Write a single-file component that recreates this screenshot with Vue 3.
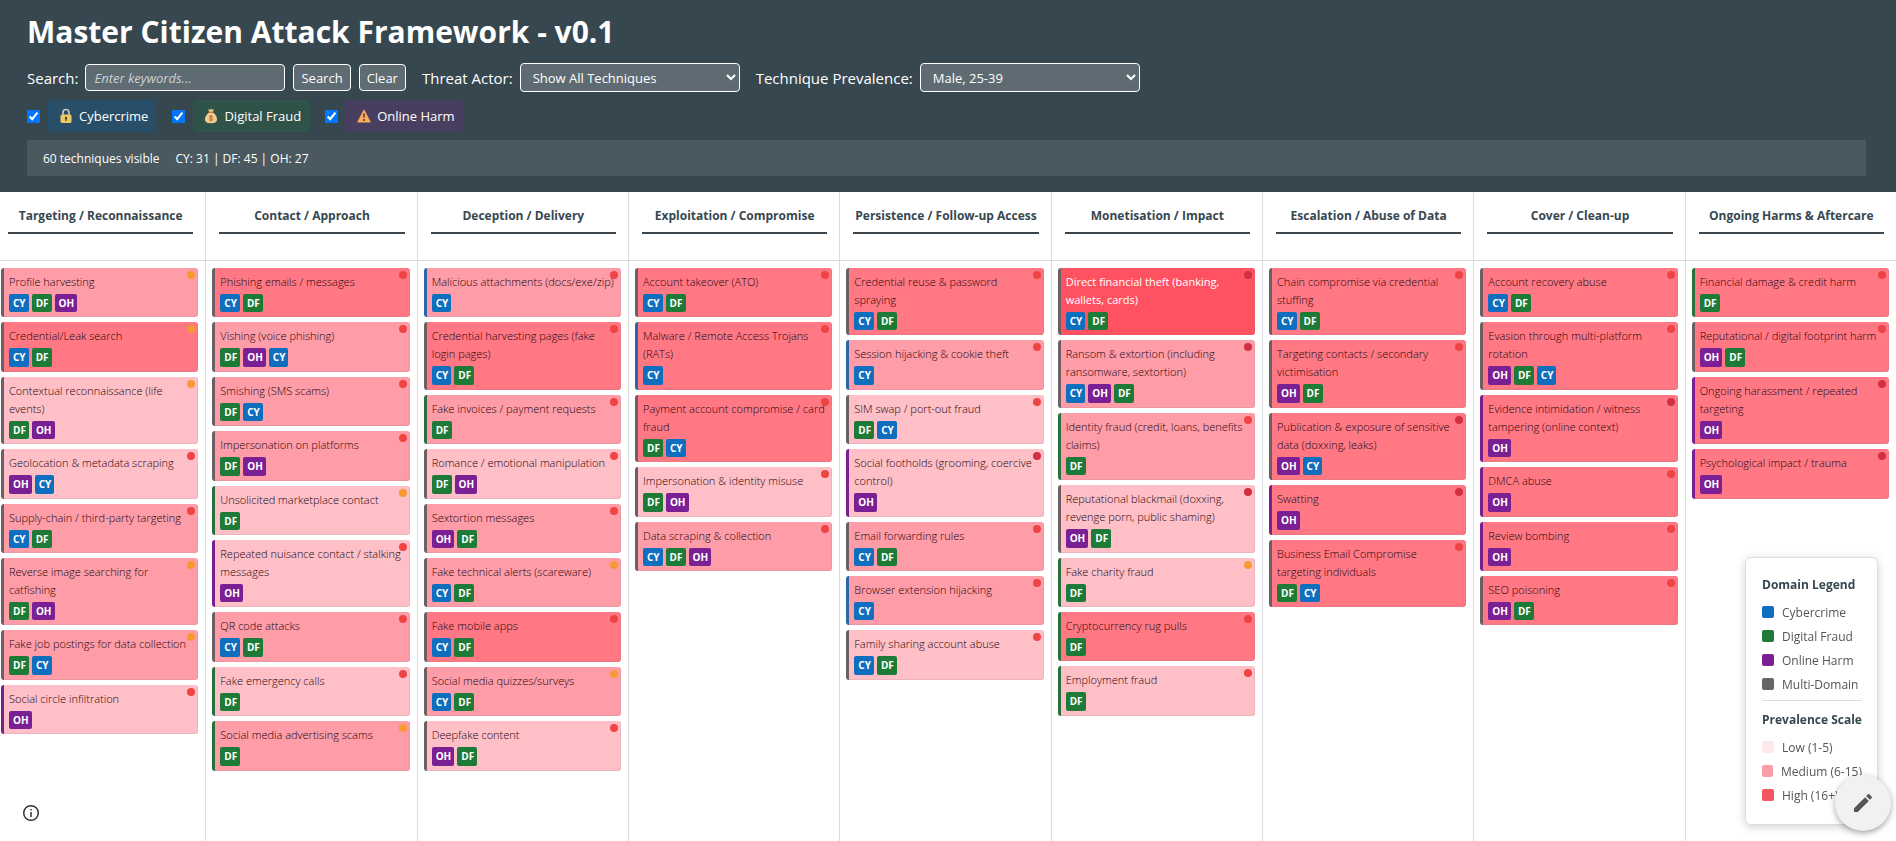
<template>
  <div class="framework">
    <header class="top-bar">
      <h1>Master Citizen Attack Framework - v0.1</h1>

      <form class="controls" @submit.prevent>
        <div class="control">
          <label for="search">Search:</label>
          <input id="search" v-model="keywords" class="field search-field" type="text" placeholder="Enter keywords...">
        </div>
        <button class="field btn" type="submit">Search</button>
        <button class="field btn" type="button" @click="keywords = ''">Clear</button>
        <div class="control spaced">
          <label for="actor">Threat Actor:</label>
          <select id="actor" class="field select-field">
            <option>Show All Techniques</option>
          </select>
        </div>
        <div class="control spaced">
          <label for="prevalence">Technique Prevalence:</label>
          <select id="prevalence" class="field select-field">
            <option>Male, 25-39</option>
          </select>
        </div>
      </form>

      <div class="domain-filters">
        <div class="filter">
          <input id="filter-cy" v-model="enabled.CY" type="checkbox">
          <label for="filter-cy" class="pill pill-cy">
            <svg width="14" height="16" viewBox="0 0 14 16">
              <path d="M4 8V4.5a3 3 0 0 1 6 0V8" fill="none" stroke="#c9cdd0" stroke-width="1.6"/>
              <rect x="1.5" y="6.5" width="11" height="8.5" rx="1.5" fill="#efc763"/>
              <circle cx="7" cy="10" r="1.2" fill="#4e4232"/>
              <path d="M6.4 10h1.2v3H6.4z" fill="#4e4232"/>
            </svg>
            Cybercrime
          </label>
        </div>
        <div class="filter">
          <input id="filter-df" v-model="enabled.DF" type="checkbox">
          <label for="filter-df" class="pill pill-df">
            <svg width="14" height="16" viewBox="0 0 14 16">
              <path d="M4 1l1.6.8L7 .8l1.4 1L10 1 8.8 4H5.2z" fill="#f2c078"/>
              <path d="M5 4.6h4c2.4 1.8 4 4.2 4 6.6 0 2.6-1.8 4-6 4s-6-1.4-6-4c0-2.4 1.6-4.8 4-6.6z" fill="#f3c993"/>
              <path d="M4.8 4.4h4.4" stroke="#c77c30" stroke-width="1.2"/>
              <path d="M8.8 8.6C8.2 7.8 5.4 7.6 5.4 9s3.3.9 3.3 2.3-2.8 1.2-3.5.3M7 7v6.4" fill="none" stroke="#b5702d" stroke-width="1"/>
            </svg>
            Digital Fraud
          </label>
        </div>
        <div class="filter">
          <input id="filter-oh" v-model="enabled.OH" type="checkbox">
          <label for="filter-oh" class="pill pill-oh">
            <svg width="14" height="16" viewBox="0 0 14 16">
              <path d="M7 2L13.2 14H.8z" fill="#fbab5c" stroke="#fbab5c" stroke-linejoin="round"/>
              <path d="M6.1 5.4h1.8L7.5 10h-1z" fill="#4b3a35"/>
              <circle cx="7" cy="12" r="1" fill="#4b3a35"/>
            </svg>
            Online Harm
          </label>
        </div>
      </div>

      <div class="stats">
        <span>60 techniques visible</span>
        <span>CY: 31 | DF: 45 | OH: 27</span>
      </div>
    </header>

    <main class="matrix">
      <section v-for="column in columns" :key="column.title" class="column">
        <div class="column-head">
          <h2>{{ column.title }}</h2>
        </div>
        <div class="cards">
          <article
            v-for="card in column.cards"
            :key="card.name"
            class="card"
            :class="[`level-${card.level}`, edgeClass(card.domains)]"
          >
            <span class="dot" :class="`dot-${card.risk}`"></span>
            <div class="card-name">{{ card.name }}</div>
            <div class="tags">
              <span v-for="tag in card.domains" :key="tag" class="tag" :class="`bg-${tag}`">{{ tag }}</span>
            </div>
          </article>
        </div>
      </section>
    </main>

    <button class="info-btn" type="button" aria-label="About">
      <svg width="18" height="18" viewBox="0 0 18 18" fill="none" stroke="#30343a">
        <circle cx="9" cy="9" r="7.3" stroke-width="1.5"/>
        <path d="M9 8v5M9 5v1.5" stroke-width="1.5"/>
      </svg>
    </button>

    <aside class="legend">
      <h3>Domain Legend</h3>
      <ul>
        <li v-for="item in domainLegend" :key="item.label">
          <span class="swatch" :class="item.cls"></span>{{ item.label }}
        </li>
      </ul>
      <h3 class="divided">Prevalence Scale</h3>
      <ul>
        <li v-for="item in scaleLegend" :key="item.label">
          <span class="swatch" :class="item.cls"></span>{{ item.label }}
        </li>
      </ul>
    </aside>

    <button class="edit-btn" type="button" aria-label="Edit">
      <svg width="24" height="24" viewBox="0 0 24 24" fill="#555">
        <path d="M3 17.25V21h3.75L17.81 9.94l-3.75-3.75L3 17.25zM20.71 7.04a1 1 0 0 0 0-1.41l-2.34-2.34a1 1 0 0 0-1.41 0l-1.83 1.83 3.75 3.75 1.83-1.83z"/>
      </svg>
    </button>
  </div>
</template>

<script setup>
import { reactive, ref } from 'vue'

const keywords = ref('')
const enabled = reactive({ CY: true, DF: true, OH: true })

// level: shade of the card, 1 (light) to 4 (strong)
const t = (name, domains, level, risk = 'high') => ({
  name,
  domains: domains.split(' '),
  level,
  risk
})

const columns = [
  {
    title: 'Targeting / Reconnaissance',
    cards: [
      t('Profile harvesting', 'CY DF OH', 2, 'medium'),
      t('Credential/Leak search', 'CY DF', 3, 'medium'),
      t('Contextual reconnaissance (life events)', 'DF OH', 1, 'medium'),
      t('Geolocation & metadata scraping', 'OH CY', 1),
      t('Supply-chain / third-party targeting', 'CY DF', 2),
      t('Reverse image searching for catfishing', 'DF OH', 2, 'medium'),
      t('Fake job postings for data collection', 'DF CY', 2, 'medium'),
      t('Social circle infiltration', 'OH', 1)
    ]
  },
  {
    title: 'Contact / Approach',
    cards: [
      t('Phishing emails / messages', 'CY DF', 3),
      t('Vishing (voice phishing)', 'DF OH CY', 2),
      t('Smishing (SMS scams)', 'DF CY', 2),
      t('Impersonation on platforms', 'DF OH', 2),
      t('Unsolicited marketplace contact', 'DF', 1, 'medium'),
      t('Repeated nuisance contact / stalking messages', 'OH', 1),
      t('QR code attacks', 'CY DF', 2),
      t('Fake emergency calls', 'DF', 1),
      t('Social media advertising scams', 'DF', 2, 'medium')
    ]
  },
  {
    title: 'Deception / Delivery',
    cards: [
      t('Malicious attachments (docs/exe/zip)', 'CY', 2),
      t('Credential harvesting pages (fake login pages)', 'CY DF', 3),
      t('Fake invoices / payment requests', 'DF', 2),
      t('Romance / emotional manipulation', 'DF OH', 1),
      t('Sextortion messages', 'OH DF', 2),
      t('Fake technical alerts (scareware)', 'CY DF', 2, 'medium'),
      t('Fake mobile apps', 'CY DF', 3),
      t('Social media quizzes/surveys', 'CY DF', 2, 'medium'),
      t('Deepfake content', 'OH DF', 1)
    ]
  },
  {
    title: 'Exploitation / Compromise',
    cards: [
      t('Account takeover (ATO)', 'CY DF', 3),
      t('Malware / Remote Access Trojans (RATs)', 'CY', 3),
      t('Payment account compromise / card fraud', 'DF CY', 3),
      t('Impersonation & identity misuse', 'DF OH', 1),
      t('Data scraping & collection', 'CY DF OH', 2)
    ]
  },
  {
    title: 'Persistence / Follow-up Access',
    cards: [
      t('Credential reuse & password spraying', 'CY DF', 3),
      t('Session hijacking & cookie theft', 'CY', 2),
      t('SIM swap / port-out fraud', 'DF CY', 1),
      t('Social footholds (grooming, coercive control)', 'OH', 1, 'critical'),
      t('Email forwarding rules', 'CY DF', 2),
      t('Browser extension hijacking', 'CY', 2),
      t('Family sharing account abuse', 'CY DF', 1)
    ]
  },
  {
    title: 'Monetisation / Impact',
    cards: [
      t('Direct financial theft (banking, wallets, cards)', 'CY DF', 4, 'critical'),
      t('Ransom & extortion (including ransomware, sextortion)', 'CY OH DF', 2, 'critical'),
      t('Identity fraud (credit, loans, benefits claims)', 'DF', 2),
      t('Reputational blackmail (doxxing, revenge porn, public shaming)', 'OH DF', 1, 'critical'),
      t('Fake charity fraud', 'DF', 1, 'medium'),
      t('Cryptocurrency rug pulls', 'DF', 3),
      t('Employment fraud', 'DF', 1)
    ]
  },
  {
    title: 'Escalation / Abuse of Data',
    cards: [
      t('Chain compromise via credential stuffing', 'CY DF', 3),
      t('Targeting contacts / secondary victimisation', 'OH DF', 3),
      t('Publication & exposure of sensitive data (doxxing, leaks)', 'OH CY', 3, 'critical'),
      t('Swatting', 'OH', 3, 'critical'),
      t('Business Email Compromise targeting individuals', 'DF CY', 3)
    ]
  },
  {
    title: 'Cover / Clean-up',
    cards: [
      t('Account recovery abuse', 'CY DF', 3),
      t('Evasion through multi-platform rotation', 'OH DF CY', 3),
      t('Evidence intimidation / witness tampering (online context)', 'OH', 3, 'critical'),
      t('DMCA abuse', 'OH', 3),
      t('Review bombing', 'OH', 3),
      t('SEO poisoning', 'OH DF', 3)
    ]
  },
  {
    title: 'Ongoing Harms & Aftercare',
    cards: [
      t('Financial damage & credit harm', 'DF', 3),
      t('Reputational / digital footprint harm', 'OH DF', 3),
      t('Ongoing harassment / repeated targeting', 'OH', 3, 'critical'),
      t('Psychological impact / trauma', 'OH', 3, 'critical')
    ]
  }
]

const domainLegend = [
  { label: 'Cybercrime', cls: 'bg-CY' },
  { label: 'Digital Fraud', cls: 'bg-DF' },
  { label: 'Online Harm', cls: 'bg-OH' },
  { label: 'Multi-Domain', cls: 'bg-multi' }
]

const scaleLegend = [
  { label: 'Low (1-5)', cls: 'scale-low' },
  { label: 'Medium (6-15)', cls: 'scale-medium' },
  { label: 'High (16+)', cls: 'scale-high' }
]

const edgeClass = (domains) => (domains.length > 1 ? 'edge-multi' : `edge-${domains[0]}`)
</script>

<style>
body {
  margin: 0;
  background: #fff;
}
</style>

<style scoped>
.framework {
  display: flex;
  flex-direction: column;
  min-height: 100vh;
  overflow: hidden;
  font-family: 'Segoe UI', 'Open Sans', 'Noto Sans', sans-serif;
  color: #37474f;
}

.top-bar {
  box-sizing: border-box;
  padding: 8px 30px 16px 27px;
  background: #36474f;
  color: #fff;
}

h1 {
  margin: 0 0 7px;
  font-size: 30px;
  line-height: 48px;
  font-weight: 700;
}

.controls {
  display: flex;
  align-items: center;
  gap: 8px;
  height: 29px;
}

.control {
  display: flex;
  align-items: center;
  gap: 7px;
  font-size: 15px;
}

.control.spaced {
  margin-left: 8px;
}

.field {
  box-sizing: border-box;
  height: 27px;
  border: 1px solid #fff;
  border-radius: 4px;
  background: rgba(255, 255, 255, 0.2);
  color: #fff;
  font-family: inherit;
  font-size: 13px;
}

.search-field {
  width: 200px;
  padding: 0 8px;
}

.search-field::placeholder {
  color: #ccd2d5;
  font-style: italic;
}

.btn {
  padding: 0 7px;
}

.select-field {
  width: 220px;
  height: 29px;
  padding: 0 8px;
}

.domain-filters {
  display: flex;
  gap: 16px;
  margin: 8px 0;
}

.filter {
  display: flex;
  align-items: center;
  gap: 8px;
}

.filter input {
  width: 13px;
  height: 13px;
  margin: 0;
}

.pill {
  display: flex;
  align-items: center;
  gap: 6px;
  box-sizing: border-box;
  height: 32px;
  padding: 0 7px 0 10px;
  border: 1px solid;
  border-radius: 4px;
  font-size: 13px;
}

.pill-cy {
  background: #294f68;
  border-color: #225374;
}

.pill-df {
  background: #2f5249;
  border-color: #2b5c46;
}

.pill-oh {
  background: #483f60;
  border-color: #4a3c66;
}

.stats {
  display: flex;
  gap: 16px;
  padding: 2px 16px 0;
  background: rgba(255, 255, 255, 0.1);
  font-size: 12px;
  line-height: 34px;
}

.matrix {
  display: grid;
  grid-template-columns: repeat(9, minmax(0, 1fr));
  flex: 1;
  margin: 0 -1px 0 -5px;
}

.column {
  border-right: 1px solid #d9dce0;
}

.column-head {
  box-sizing: border-box;
  height: 69px;
  padding: 11px 12px 0 13px;
  border-bottom: 1px solid #d9dce0;
}

h2 {
  margin: 0;
  padding-bottom: 3px;
  border-bottom: 2px solid #3d464c;
  font-size: 12px;
  line-height: 26px;
  font-weight: 700;
  text-align: center;
  white-space: nowrap;
}

.cards {
  display: flex;
  flex-direction: column;
  gap: 5px;
  padding: 7px 7px 8px 6px;
}

.card {
  position: relative;
  padding: 5px 3px 5px 5px;
  border-left: 3px solid;
  border-radius: 3px;
  box-shadow: inset -1px -1px 0 rgba(120, 120, 130, 0.14);
  color: #1c060b;
}

.card-name {
  font-size: 11px;
  line-height: 18px;
  font-weight: 300;
}

.level-1 {
  background: #febfc7;
}

.level-2 {
  background: #fe9ca7;
}

.level-3 {
  background: #ff7884;
}

.level-4 {
  background: #ff5261;
  color: #fff;
}

.level-4 .card-name {
  font-weight: 400;
}

.edge-CY {
  border-color: #2b66a8;
}

.edge-DF {
  border-color: #28703c;
}

.edge-OH {
  border-color: #7b1f8e;
}

.edge-multi {
  border-color: #6c6064;
}

.dot {
  position: absolute;
  top: 3px;
  right: 3px;
  width: 8px;
  height: 8px;
  border-radius: 50%;
}

.dot-medium {
  background: #f79a35;
}

.dot-high {
  background: #ef4444;
}

.dot-critical {
  background: #d13040;
}

.tags {
  display: flex;
  gap: 3px;
  margin-top: 3px;
}

.tag {
  padding: 2px 3px 2px 4px;
  border-radius: 2px;
  color: #fff;
  font-size: 10px;
  line-height: 1.44;
  font-weight: 700;
}

.bg-CY {
  background: #106ebe;
}

.bg-DF {
  background: #1e7a37;
}

.bg-OH {
  background: #7b1f94;
}

.bg-multi {
  background: #666;
}

.info-btn {
  position: fixed;
  left: 22px;
  bottom: 19px;
  width: 18px;
  height: 18px;
  padding: 0;
  border: none;
  background: none;
}

.info-btn svg {
  display: block;
}

.legend {
  position: fixed;
  right: 18px;
  bottom: 16px;
  box-sizing: border-box;
  width: 133px;
  padding: 16px 15px 17px 16px;
  border: 1px solid #dcdfe2;
  border-radius: 6px;
  background: #fff;
  box-shadow: 0 2px 10px rgba(0, 0, 0, 0.18);
  white-space: nowrap;
}

.legend h3 {
  margin: 0 0 4px;
  font-size: 12px;
  line-height: 22px;
  font-weight: 700;
}

.legend h3.divided {
  margin-top: 4px;
  padding-top: 8px;
  border-top: 1px solid #d9dce0;
}

.legend ul {
  margin: 0;
  padding: 0;
  list-style: none;
}

.legend li {
  display: flex;
  align-items: center;
  gap: 8px;
  height: 24px;
  font-size: 12px;
  color: #555;
}

.swatch {
  width: 12px;
  height: 12px;
  border-radius: 2px;
}

.scale-low {
  background: #fde8ea;
}

.scale-medium {
  background: #fb9ca6;
}

.scale-high {
  background: #f35562;
}

.edit-btn {
  position: fixed;
  right: 5px;
  bottom: 10px;
  display: flex;
  align-items: center;
  justify-content: center;
  width: 56px;
  height: 56px;
  padding: 0;
  border: none;
  border-radius: 50%;
  background: #f1f1f1;
  box-shadow: 0 2px 6px rgba(0, 0, 0, 0.35);
}
</style>
